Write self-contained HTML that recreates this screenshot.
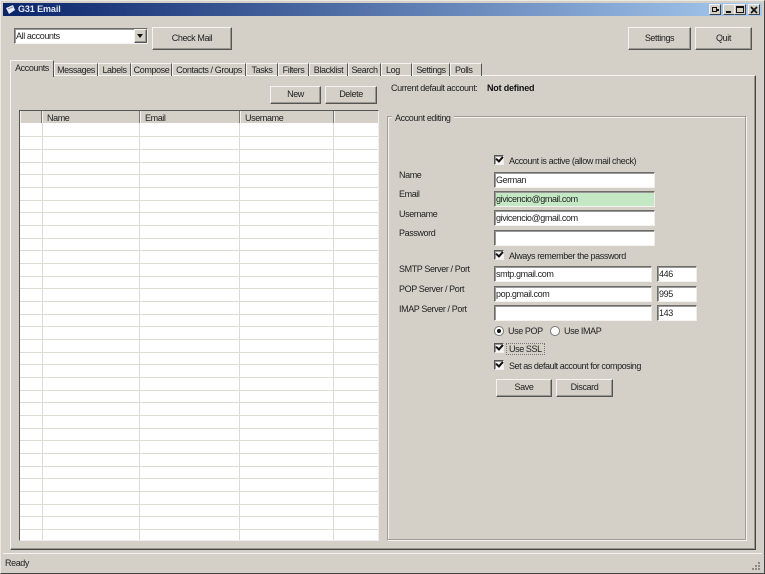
<!DOCTYPE html>
<html><head><meta charset="utf-8"><style>
html,body{margin:0;padding:0;background:#d4d0c8}
#w{position:relative;width:765px;height:574px;overflow:hidden;background:#d4d0c8;font:9px/12px "Liberation Sans",sans-serif;letter-spacing:-.4px;color:#222;filter:blur(.35px)}
#w div{position:absolute;box-sizing:border-box}
.t{white-space:nowrap}
.b{background:#d4d0c8;border:1px solid;border-color:#f4f3f0 #555 #555 #f4f3f0;box-shadow:inset -1px -1px 0 #9a978f;text-align:center}
.i{background:#fff;border:1px solid;border-color:#6e6c66 #eeece8 #f4f3f0 #6e6c66;box-shadow:inset 1px 1px 0 #999;padding:1px 0 0 1px;white-space:nowrap}
.tab{top:63px;height:13px;border-top:1px solid #f4f3f0;border-left:1px solid #f4f3f0;border-right:1px solid #555;text-align:center;padding-top:0;white-space:nowrap}
.c{width:10px;height:10px;background:#f6f5f2;border:1px solid;border-color:#555 #eee #eee #555;box-shadow:inset 1px 1px 0 #999;left:494px}
.c:after{content:"";position:absolute;left:1px;top:0;width:5px;height:3px;border-left:2px solid #111;border-bottom:2px solid #111;transform:rotate(-48deg)}
.wb{top:4px;width:12px;height:11px;background:#d4d0c8;border:1px solid;border-color:#f4f3f0 #444 #444 #f4f3f0}
.h{top:111px;height:12px;background:#d4d0c8;border-right:1px solid #777;border-left:1px solid #f4f3f0;padding:1px 0 0 4px;white-space:nowrap}
</style></head><body><div id="w">
<div style="left:0;top:0;width:765px;height:574px;border:1px solid;border-color:#ece9e3 #444 #444 #ece9e3"></div>
<div style="left:3px;top:3px;width:759px;height:13px;background:linear-gradient(90deg,#0a246a,#a6caf0)"></div>
<svg style="position:absolute;left:5px;top:4px" width="11" height="11"><path d="M1 4 8 1 10 6 4 10Z" fill="#e8eaf2"/><path d="M3 5 8 3" stroke="#8a94b8"/></svg>
<div class="t" style="left:18px;top:3px;color:#e6e9f2;font-weight:bold;letter-spacing:-.1px">G31 Email</div>
<div class="wb" style="left:709px"><div style="left:2px;top:2px;width:5px;height:5px;border:1px solid #111"></div><div style="left:7px;top:4px;width:2px;height:2px;background:#111"></div></div>
<div class="wb" style="left:723px"><div style="left:2px;top:6px;width:5px;height:2px;background:#111"></div></div>
<div class="wb" style="left:734px"><div style="left:1px;top:1px;width:8px;height:7px;border:1px solid #111;border-top-width:2px"></div></div>
<div class="wb" style="left:748px"><svg style="position:absolute;left:1px;top:1px" width="8" height="8"><path d="M1 1 7 7M7 1 1 7" stroke="#111" stroke-width="1.6"/></svg></div>

<div class="i" style="left:14px;top:28px;width:134px;height:16px;padding-top:1px">All accounts</div>
<div class="b" style="left:134px;top:29px;width:13px;height:14px"><div style="left:2px;top:4px;width:0;height:0;border:3px solid transparent;border-top:4px solid #111;border-bottom:0"></div></div>
<div class="b" style="left:152px;top:27px;width:80px;height:23px;padding-top:4px">Check Mail</div>
<div class="b" style="left:628px;top:27px;width:63px;height:23px;padding-top:4px">Settings</div>
<div class="b" style="left:695px;top:27px;width:57px;height:23px;padding-top:4px">Quit</div>

<div style="left:10px;top:75px;width:746px;height:475px;border:1px solid;border-color:#f4f3f0 #444 #444 #f4f3f0;box-shadow:inset -1px -1px 0 #9a978f"></div>
<div class="tab" style="left:54px;width:44px">Messages</div>
<div class="tab" style="left:98px;width:33px">Labels</div>
<div class="tab" style="left:131px;width:41px">Compose</div>
<div class="tab" style="left:172px;width:74px">Contacts / Groups</div>
<div class="tab" style="left:246px;width:32px">Tasks</div>
<div class="tab" style="left:278px;width:31px">Filters</div>
<div class="tab" style="left:309px;width:39px">Blacklist</div>
<div class="tab" style="left:348px;width:33px">Search</div>
<div class="tab" style="left:381px;width:31px;text-align:left;padding-left:4px">Log</div>
<div class="tab" style="left:412px;width:38px">Settings</div>
<div class="tab" style="left:450px;width:32px;text-align:left;padding-left:4px">Polls</div>
<div class="tab" style="left:10px;top:60px;width:44px;height:17px;background:#d4d0c8;padding-top:1px">Accounts</div>

<div class="b" style="left:270px;top:86px;width:51px;height:18px;padding-top:1px">New</div>
<div class="b" style="left:325px;top:86px;width:52px;height:18px;padding-top:1px">Delete</div>
<div class="t" style="left:391px;top:82px">Current default account:</div>
<div class="t" style="left:487px;top:82px;font-weight:bold;color:#111;letter-spacing:-.2px">Not defined</div>

<div style="left:19px;top:110px;width:360px;height:431px;background:#fff;border:1px solid;border-color:#555 #eee #eee #555"></div>
<svg style="position:absolute;left:20px;top:123px" width="358" height="417"><path d="M0 13.500H358M0 26.500H358M0 39.500H358M0 51.500H358M0 64.500H358M0 77.500H358M0 89.500H358M0 102.500H358M0 115.500H358M0 127.500H358M0 140.500H358M0 153.500H358M0 165.500H358M0 178.500H358M0 191.500H358M0 203.500H358M0 216.500H358M0 229.500H358M0 241.500H358M0 254.500H358M0 267.500H358M0 279.500H358M0 292.500H358M0 305.500H358M0 317.500H358M0 330.500H358M0 343.500H358M0 355.500H358M0 368.500H358M0 381.500H358M0 393.500H358M0 406.500H358M22.500 0V417M119.500 0V417M219.500 0V417M313.500 0V417" stroke="#dedbd5" fill="none"/></svg>
<div class="h" style="left:20px;width:22px"></div>
<div class="h" style="left:42px;width:98px">Name</div>
<div class="h" style="left:140px;width:100px">Email</div>
<div class="h" style="left:240px;width:94px">Username</div>
<div class="h" style="left:334px;width:44px;border-right:0"></div>

<div style="left:387px;top:116px;width:359px;height:424px;border:1px solid #a09d96;box-shadow:inset 1px 1px 0 #f4f3f0,1px 1px 0 #f4f3f0"></div>
<div class="t" style="left:392px;top:112px;background:#d4d0c8;padding:0 3px">Account editing</div>

<div class="c" style="top:155px"></div><div class="t" style="left:509px;top:155px">Account is active (allow mail check)</div>
<div class="t" style="left:399px;top:169px">Name</div>
<div class="t" style="left:399px;top:188px">Email</div>
<div class="t" style="left:399px;top:208px">Username</div>
<div class="t" style="left:399px;top:227px">Password</div>
<div class="i" style="left:494px;top:172px;width:161px;height:16px">German</div>
<div class="i" style="left:494px;top:191px;width:161px;height:16px;background:#c4e8c4">givicencio@gmail.com</div>
<div class="i" style="left:494px;top:210px;width:161px;height:16px">givicencio@gmail.com</div>
<div class="i" style="left:494px;top:230px;width:161px;height:16px"></div>
<div class="c" style="top:250px"></div><div class="t" style="left:509px;top:250px">Always remember the password</div>
<div class="t" style="left:399px;top:263px">SMTP Server / Port</div>
<div class="t" style="left:399px;top:283px">POP Server / Port</div>
<div class="t" style="left:399px;top:303px">IMAP Server / Port</div>
<div class="i" style="left:494px;top:266px;width:158px;height:16px">smtp.gmail.com</div>
<div class="i" style="left:657px;top:266px;width:40px;height:16px">446</div>
<div class="i" style="left:494px;top:286px;width:158px;height:16px">pop.gmail.com</div>
<div class="i" style="left:657px;top:286px;width:40px;height:16px">995</div>
<div class="i" style="left:494px;top:305px;width:158px;height:16px"></div>
<div class="i" style="left:657px;top:305px;width:40px;height:16px">143</div>
<div style="left:494px;top:326px;width:10px;height:10px;border-radius:50%;background:#fff;border:1px solid #777"><div style="left:2px;top:2px;width:4px;height:4px;border-radius:50%;background:#111"></div></div>
<div class="t" style="left:508px;top:325px">Use POP</div>
<div style="left:550px;top:326px;width:10px;height:10px;border-radius:50%;background:#fff;border:1px solid #777"></div>
<div class="t" style="left:564px;top:325px">Use IMAP</div>
<div class="c" style="top:343px"></div>
<div class="t" style="left:506px;top:343px;height:12px;padding:0 2px;border:1px dotted #777;line-height:10px">Use SSL</div>
<div class="c" style="top:360px"></div><div class="t" style="left:509px;top:360px;letter-spacing:-.45px">Set as default account for composing</div>
<div class="b" style="left:496px;top:379px;width:56px;height:18px;padding-top:1px">Save</div>
<div class="b" style="left:556px;top:379px;width:57px;height:18px;padding-top:1px">Discard</div>

<div style="left:3px;top:553px;width:759px;height:1px;background:#f4f3f0"></div>
<div class="t" style="left:5px;top:557px;color:#222">Ready</div>
<svg style="position:absolute;left:751px;top:561px" width="10" height="10"><path d="M7 1h2v2H7zM4 4h2v2H4zM7 4h2v2H7zM1 7h2v2H1zM4 7h2v2H4zM7 7h2v2H7z" fill="#8d8a83"/></svg>
</div></body></html>
